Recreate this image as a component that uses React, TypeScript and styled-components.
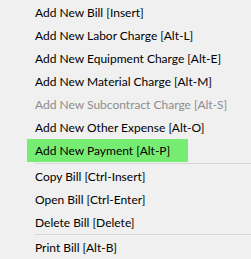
import React from "react";
import styled, { createGlobalStyle } from "styled-components";

const GlobalStyle = createGlobalStyle`
  html, body {
    margin: 0;
    padding: 0;
    background: #f0f0f0;
  }
`;

const Menu = styled.div`
  width: 251px;
  height: 259px;
  overflow: hidden;
  background: #f0f0f0;
  padding-top: 1px;
  box-sizing: border-box;
  font-family: Lato, "Noto Sans", sans-serif;
  font-size: 12px;
  display: flex;
  flex-direction: column;
  align-items: flex-start;
`;

const Item = styled.div<{ $active?: boolean; $disabled?: boolean }>`
  height: 23px;
  line-height: 23px;
  padding: 0 18px 0 8px;
  margin-left: 27px;
  white-space: nowrap;
  color: ${(p) => (p.$disabled ? "#8d8d8d" : "#000")};
  background: ${(p) => (p.$active ? "#77ec73" : "transparent")};
  cursor: default;
`;

const Separator = styled.div`
  align-self: stretch;
  height: 7px;
  margin-left: 35px;
  display: flex;
  align-items: center;

  &::after {
    content: "";
    flex: 1;
    height: 1px;
    background: #d7d7d7;
  }
`;

type Entry = { label?: string; active?: boolean; disabled?: boolean; sep?: boolean };

const entries: Entry[] = [
  { label: "Add New Bill [Insert]" },
  { label: "Add New Labor Charge [Alt-L]" },
  { label: "Add New Equipment Charge [Alt-E]" },
  { label: "Add New Material Charge [Alt-M]" },
  { label: "Add New Subcontract Charge [Alt-S]", disabled: true },
  { label: "Add New Other Expense [Alt-O]" },
  { label: "Add New Payment [Alt-P]", active: true },
  { sep: true },
  { label: "Copy Bill [Ctrl-Insert]" },
  { label: "Open Bill [Ctrl-Enter]" },
  { label: "Delete Bill [Delete]" },
  { sep: true },
  { label: "Print Bill [Alt-B]" },
];

const App = () => {
  return (
    <>
      <GlobalStyle />
      <Menu>
        {entries.map((e, i) =>
          e.sep ? (
            <Separator key={i} />
          ) : (
            <Item key={i} $active={e.active} $disabled={e.disabled}>
              {e.label}
            </Item>
          )
        )}
      </Menu>
    </>
  );
};

export default App;
